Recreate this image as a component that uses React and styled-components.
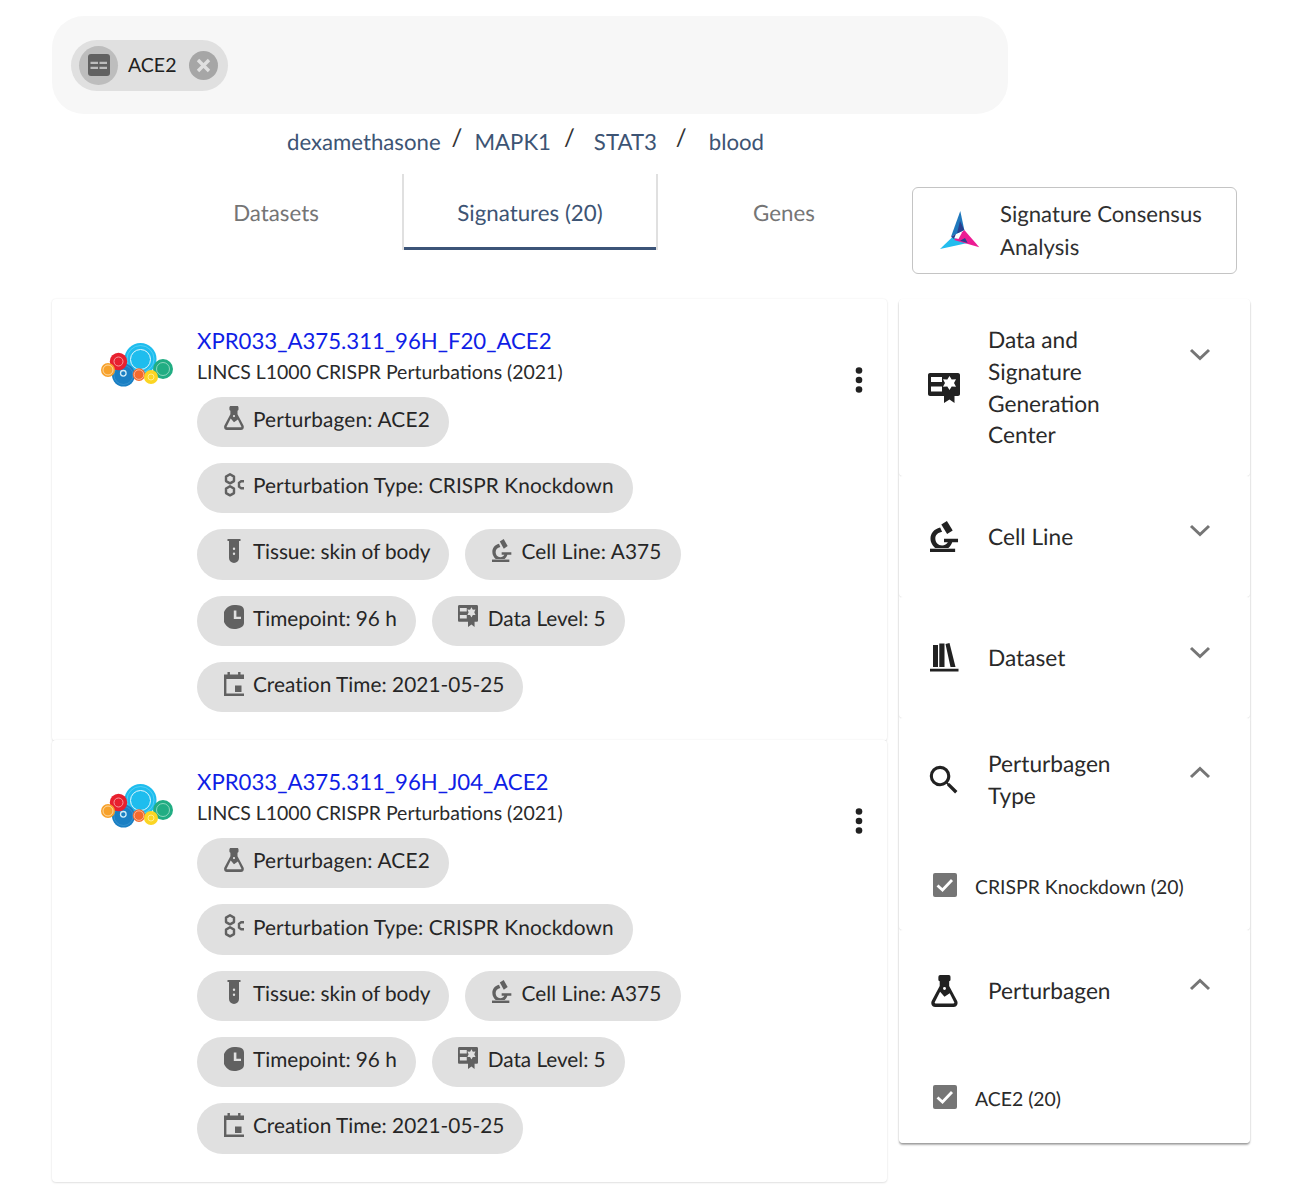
import React from 'react';
import styled, { createGlobalStyle } from 'styled-components';

const Global = createGlobalStyle`
  html, body { margin: 0; padding: 0; background: #fff; }
  body { font-family: Lato, "Open Sans", sans-serif; color: #212121; text-rendering: geometricPrecision; }
  * { box-sizing: border-box; }
`;

const Page = styled.div`
  width: 1294px;
  height: 1188px;
  padding: 16px 44px 0 52px;
  overflow: hidden;
`;
const SearchBox = styled.div`
  width: 956px;
  height: 98px;
  border-radius: 32px;
  background: #f7f7f7;
  display: flex;
  align-items: center;
  padding: 0 19px;
`;
const Chip = styled.div`
  height: 51px;
  width: 157px;
  border-radius: 26px;
  background: #e0e0e0;
  display: flex;
  align-items: center;
  padding: 0 10px 0 8px;
  font-size: 19.5px;
`;
const ChipAvatar = styled.div`
  width: 39px;
  height: 39px;
  border-radius: 50%;
  background: #bdbdbd;
  display: flex;
  align-items: center;
  justify-content: center;
  flex: none;
`;
const ChipLabel = styled.span`
  margin-left: 10px;
  flex: 1;
`;
const Suggestions = styled.div`
  display: flex;
  align-items: baseline;
  padding-left: 235px;
  height: 63px;
  padding-top: 13px;
  font-size: 22.2px;
  color: #3d5474;
`;
const Crumb = styled.span`
  color: #3d5474;
  margin-left: ${p => p.$before}px;
  margin-right: ${p => p.$after}px;
`;
const Slash = styled.span`
  color: #333;
  font-size: 24px;
  position: relative;
  top: -4px;
`;
const TabRow = styled.div`
  display: flex;
  align-items: flex-start;
  height: 125px;
  margin-top: -3px;
  padding-left: 97px;
`;
const Tab = styled.div`
  width: 254px;
  height: 76px;
  display: flex;
  align-items: center;
  justify-content: center;
  font-size: 22.3px;
  color: ${p => (p.$active ? '#3d5474' : '#757575')};
  ${p => p.$active && `
    margin: 0 -1px;
    width: 256px;
    border-left: 2px solid #e0e0e0;
    border-right: 2px solid #e0e0e0;
    box-shadow: inset 0 -3px 0 #3c5478;
  `}
`;
const ConsensusButton = styled.div`
  margin: 13px 0 0 1px;
  width: 325px;
  height: 87px;
  border: 1px solid #c4c4c4;
  border-radius: 6px;
  display: flex;
  align-items: center;
  padding: 0 20px 2px 27px;
  font-size: 22.15px;
  line-height: 33px;
  color: #303030;
`;
const ConsensusText = styled.span`
  margin-left: 20px;
`;
const Columns = styled.div`
  display: flex;
  align-items: flex-start;
  gap: 12px;
`;
const CardColumn = styled.div`
  width: 835px;
  flex: none;
`;
const Card = styled.div`
  height: 442px;
  background: #fff;
  border-radius: 4px;
  box-shadow: 0 1px 2px rgba(0,0,0,.1), 0 0 2px rgba(0,0,0,.08);
  display: flex;
  padding: 26px 0 0 48px;
  position: relative;
  & + & { margin-top: -0.6px; }
`;
const LogoWrap = styled.div`
  width: 97px;
  flex: none;
  padding-top: 16px;
`;
const CardBody = styled.div`
  width: 640px;
`;
const Title = styled.a`
  display: block;
  font-size: 22.2px;
  line-height: 32px;
  color: #0f1ee6;
`;
const Subtitle = styled.div`
  font-size: 19.47px;
  line-height: 30px;
  color: #2a2a2a;
  margin: 1px 0 8.7px;
`;
const ChipWrap = styled.div`
  display: flex;
  flex-wrap: wrap;
  gap: 16px;
`;
const MetaChip = styled.div`
  height: 50.3px;
  border-radius: 26px;
  background: #e0e0e0;
  display: flex;
  align-items: center;
  padding-right: 19px;
  font-size: 20.8px;
  color: #262626;
  letter-spacing: ${p => p.$track}px;
`;
const MetaIcon = styled.span`
  width: 56px;
  height: 24px;
  flex: none;
  display: flex;
  justify-content: center;
  padding: 0 7.5px 0 24.5px;
  margin-top: -7px;
  color: #616161;
`;
const MetaLabel = styled.span`
  margin-top: -5px;
`;
const Kebab = styled.div`
  position: absolute;
  right: 24px;
  top: 68px;
  color: #212121;
`;
const Side = styled.div`
  width: 351px;
  flex: none;
  border-radius: 4px;
  box-shadow: 0 2px 2px rgba(0,0,0,.3), 0 0 1px rgba(0,0,0,.1);
`;
const Accordion = styled.div`
  background: #fff;
  border-radius: 4px;
  height: ${p => p.$h}px;
  box-shadow: 0 1px 1px rgba(0,0,0,.1);
  position: relative;
`;
const AccordionHead = styled.div`
  display: flex;
  align-items: center;
  height: ${p => p.$h}px;
  padding-left: 28px;
  font-size: 22.7px;
  line-height: 31.9px;
  color: #2a2a2a;
`;
const AccIcon = styled.span`
  width: 34px;
  height: 34px;
  flex: none;
  color: #212121;
  display: flex;
  align-items: center;
  justify-content: center;
`;
const AccTitle = styled.div`
  width: 172px;
  margin-left: 27px;
`;
const Chevron = styled.span`
  align-self: flex-start;
  margin-top: ${p => p.$top}px;
  margin-left: 29px;
  color: #757575;
  display: flex;
`;
const CheckRow = styled.div`
  display: flex;
  align-items: center;
  padding-left: 34px;
  margin-top: ${p => p.$top}px;
  font-size: 19.4px;
  color: #2a2a2a;
`;
const CheckBox = styled.span`
  width: 24px;
  height: 24px;
  border-radius: 2px;
  background: #757575;
  display: flex;
  margin: -6px 18px 0 0;
  flex: none;
`;

const Flask = ({ w = 20, h = 24 }) => (
  <svg width={w} height={h} viewBox="0 0 20 24" fill="currentColor">
    <path fillRule="evenodd" d="M6.800 0h6.400c.9 0 1.300.7 1.300 1.600v2c0 .6-.4 1-1 1.100v3.600l6 11.200c.9 1.900-.2 4.500-2.500 4.500H2.900C.6 24-.5 21.400.4 19.500l6-11.200V4.700c-.6-.1-1-.5-1-1.100v-2C5.500.7 5.900 0 6.800 0zM6.700 12.600 2.700 20.400c-.2.500.1.900.6.900h13.400c.5 0 .8-.4.600-.9l-3.400-6.800-3.900 2.700zM10 9a1.100 1.100 0 1 0 0 2.200A1.100 1.100 0 0 0 10 9z" />
  </svg>
);
const Molecules = () => (
  <svg width="20" height="24" viewBox="0 0 20 24" fill="none" stroke="currentColor" strokeWidth="2.400">
    <path d="M6 1.300l4 2.300v4.500l-4 2.300-4-2.300V3.600zM6 13.300l4 2.300v4.500l-4 2.300-4-2.300v-4.500z" strokeLinejoin="round" />
    <path d="M20 8.300h-2.800L15 9.800v3.900l2.200 1.500H20" />
  </svg>
);
const Tube = () => (
  <svg width="14" height="24" viewBox="0 0 14 24" fill="currentColor">
    <path fillRule="evenodd" d="M0.500 0h13v2H12v17a5 5 0 0 1-10 0V2H.5zM7 8.500a1.200 1.200 0 1 0 0 2.400A1.200 1.200 0 0 0 7 8.500zm0 5a1.200 1.200 0 1 0 0 2.400 1.200 1.200 0 0 0 0-2.400z" />
  </svg>
);
const Scope = ({ w = 20, h = 23 }) => (
  <svg width={w} height={h} viewBox="0 0 30 31" preserveAspectRatio="none" fill="currentColor">
    <path d="M11.700 3.400 17.500 0l6 9.500-5.800 3.500z" />
    <path d="M10.500 6.500C4 8 .5 12.500.5 17.500c0 4 2.500 7.500 5 9.500H19c2-1.500 3.300-3.500 4-5.700h6v-3.500H14.500v3.500h4c-1 1.700-3.500 3.200-6 3.200-4 0-7-3-7-7 0-3.500 2.500-6 7-6.800z" />
    <path d="M0 27.700h26V31H0z" />
  </svg>
);
const Cert = ({ w = 20, h = 22 }) => (
  <svg width={w} height={h} viewBox="0 0 32 30" preserveAspectRatio="none" fill="currentColor">
    <path fillRule="evenodd" d="M2 0h28c1.100 0 2 .9 2 2v19c0 1.100-.9 2-2 2H2c-1.100 0-2-.9-2-2V2C0 .9.900 0 2 0zM3 4v5h11V4zM3 13.500v5h11v-5zM21.500 3l-2.200 3.500-4.300-.2 2 3.700-2 3.700 4.300-.2 2.200 3.500 2.200-3.500 4.300.2-2-3.700 2-3.700-4.300.2z" />
    <path d="M16 16.500l5.500 1 5-1V30l-5-3.500-5.500 3.500z" />
  </svg>
);
const Clock = () => (
  <svg width="20" height="24" viewBox="0 0 20 24" fill="currentColor">
    <path fillRule="evenodd" d="M10 0C16 0 20 1 20 5.500V18c0 3.500-4 6-10 6A11 12 0 0 1 10 0zM9.800 5.500V14H17v-2.300h-4.600V5.500z" />
  </svg>
);
const Calendar = () => (
  <svg width="20" height="24" viewBox="0 0 20 24" fill="currentColor">
    <path fillRule="evenodd" d="M3.500 0h2.400v2.500h8.200V0h2.400v2.500H20V7H0V2.500h3.500zM0 7h2.400v14.500H20V24H0zM11 13.500h6.500V20H11z" />
  </svg>
);
const Chev = ({ up }) => (
  <svg width="22" height="14" viewBox="0 0 22 14" fill="none" stroke="currentColor" strokeWidth="3">
    <path d={up ? 'M2 12l9-8.500 9 8.500' : 'M2 2l9 8.500L20 2'} />
  </svg>
);
const Magnify = () => (
  <svg width="38" height="38" viewBox="0 0 24 24" fill="currentColor" style={{ flex: 'none' }}>
    <path d="M9.500 3A6.500 6.500 0 0 1 16 9.500c0 1.610-.59 3.090-1.560 4.230l.27.27h.79l5 5-1.500 1.500-5-5v-.79l-.27-.27A6.516 6.516 0 0 1 9.500 16 6.500 6.500 0 0 1 3 9.500 6.500 6.500 0 0 1 9.500 3m0 2C7 5 5 7 5 9.500S7 14 9.500 14 14 12 14 9.500 12 5 9.500 5z" />
  </svg>
);
const Books = () => (
  <svg width="29" height="29" viewBox="0 0 29 29" fill="currentColor">
    <path d="M3 2h5v22H3zM9.300.5h5.200V24H9.300zM15.500 1l4-1 6 24h-5zM0 25.700h28.500v2.800H0z" />
  </svg>
);
const Check = () => (
  <svg width="24" height="24" viewBox="0 0 24 24" fill="none" stroke="#fff" strokeWidth="2.800">
    <path d="M4.500 12.500l5 4.500L19 7" />
  </svg>
);
const Logo = () => (
  <svg width="74" height="48" viewBox="0 0 74 48">
    <circle cx="40.500" cy="18" r="16" fill="#1ebdee" />
    <circle cx="40.500" cy="18" r="13.500" fill="none" stroke="#6dd5f5" strokeWidth="0.700" />
    <circle cx="40.500" cy="18.500" r="10" fill="none" stroke="#e5f7fd" strokeWidth="1" />
    <circle cx="23.500" cy="34" r="11.500" fill="#1a7fc3" />
    <circle cx="23.500" cy="34" r="9.500" fill="none" stroke="#4fa3d8" strokeWidth="0.500" />
    <circle cx="23.300" cy="32.300" r="2.800" fill="none" stroke="#d0ecf8" strokeWidth="1.300" />
    <circle cx="63" cy="28" r="10" fill="#21ad83" />
    <circle cx="63" cy="28" r="6.500" fill="none" stroke="#b8e6d6" strokeWidth="0.700" />
    <circle cx="18.500" cy="20.500" r="8.700" fill="#e8202e" />
    <circle cx="18.500" cy="20.500" r="4.500" fill="none" stroke="#f59aa0" strokeWidth="1" />
    <circle cx="8" cy="29" r="7" fill="#f7a12b" />
    <circle cx="8" cy="29" r="5" fill="none" stroke="#fde6c0" strokeWidth="0.800" />
    <circle cx="39" cy="33.600" r="6.300" fill="#f4692d" />
    <circle cx="39" cy="33.600" r="4.800" fill="none" stroke="#fcd2bd" strokeWidth="0.700" />
    <circle cx="51" cy="36" r="7" fill="#fbd523" />
    <circle cx="51" cy="36" r="3" fill="none" stroke="#fff3a8" strokeWidth="0.800" />
  </svg>
);
const ConsensusLogo = () => (
  <svg width="40" height="38" viewBox="0 0 40 38" style={{ flex: 'none' }}>
    <path d="M20.300 0 24.300 19 11 25.700z" fill="#1f78bd" />
    <path d="M0 38 12.700 25.700 27.700 32z" fill="#24bdee" />
    <path d="M24.300 19 39.300 36.300 14 29z" fill="#ec1c93" />
    <path d="M20 10 24.300 19 17 22.500z" fill="#2a3f8f" />
    <path d="M11 25.700 16 23 14 28z" fill="#2a3f8f" />
    <path d="M20 29.800 27.700 32 25 27z" fill="#2a3f8f" />
    <path d="M16.500 23 22 21.500 18.500 28 14.500 27z" fill="#fff" />
  </svg>
);
const Dots = () => (
  <svg width="8" height="26" viewBox="0 0 8 26" fill="currentColor">
    <circle cx="4" cy="3.500" r="3.300" /><circle cx="4" cy="13" r="3.300" /><circle cx="4" cy="22.500" r="3.300" />
  </svg>
);

const metas = [
  [<Flask key="a" />, 'Perturbagen: ACE2', 0.18],
  [<Molecules key="b" />, 'Perturbation Type: CRISPR Knockdown', 0.1],
  [<Tube key="c" />, 'Tissue: skin of body', -0.1],
  [<Scope key="d" />, 'Cell Line: A375', 0.13],
  [<Clock key="e" />, 'Timepoint: 96 h', -0.03],
  [<Cert key="f" />, 'Data Level: 5', -0.05],
  [<Calendar key="g" />, 'Creation Time: 2021-05-25', 0.04],
];

const SigCard = ({ title }) => (
  <Card>
    <LogoWrap><Logo /></LogoWrap>
    <CardBody>
      <Title>{title}</Title>
      <Subtitle>LINCS L1000 CRISPR Perturbations (2021)</Subtitle>
      <ChipWrap>
        {metas.map(([icon, label, track]) => (
          <MetaChip key={label} $track={track}>
            <MetaIcon>{icon}</MetaIcon>
            <MetaLabel>{label}</MetaLabel>
          </MetaChip>
        ))}
      </ChipWrap>
    </CardBody>
    <Kebab><Dots /></Kebab>
  </Card>
);

export default function App() {
  return (
    <Page>
      <Global />
      <SearchBox>
        <Chip>
          <ChipAvatar>
            <svg width="22" height="22" viewBox="0 0 22 22">
              <rect width="22" height="22" rx="3" fill="#616161" />
              <path d="M2.500 7.700h7.500V10H2.500zM11.500 7.700H19V10h-7.500zM2.500 12.700h7.500V15H2.500zM11.500 12.700H19V15h-7.500z" fill="#bdbdbd" />
            </svg>
          </ChipAvatar>
          <ChipLabel>ACE2</ChipLabel>
          <svg width="29" height="29" viewBox="0 0 29 29">
            <circle cx="14.500" cy="14.500" r="14.500" fill="#a6a6a6" />
            <path d="M9 9l11 11M20 9L9 20" stroke="#e0e0e0" strokeWidth="3.400" />
          </svg>
        </Chip>
      </SearchBox>
      <Suggestions>
        <Crumb $before={0} $after={11}>dexamethasone</Crumb>
        <Slash>/</Slash>
        <Crumb $before={12} $after={13}>MAPK1</Crumb>
        <Slash>/</Slash>
        <Crumb $before={19} $after={19}>STAT3</Crumb>
        <Slash>/</Slash>
        <Crumb $before={22} $after={0}>blood</Crumb>
      </Suggestions>
      <TabRow>
        <Tab>Datasets</Tab>
        <Tab $active>Signatures (20)</Tab>
        <Tab>Genes</Tab>
        <ConsensusButton>
          <ConsensusLogo />
          <ConsensusText>Signature Consensus Analysis</ConsensusText>
        </ConsensusButton>
      </TabRow>
      <Columns>
        <CardColumn>
          <SigCard title="XPR033_A375.311_96H_F20_ACE2" />
          <SigCard title="XPR033_A375.311_96H_J04_ACE2" />
        </CardColumn>
        <Side>
          <Accordion $h={177}>
            <AccordionHead $h={177}>
              <AccIcon><Cert w={32} h={30} /></AccIcon>
              <AccTitle>Data and Signature Generation Center</AccTitle>
              <Chevron $top={49}><Chev /></Chevron>
            </AccordionHead>
          </Accordion>
          <Accordion $h={121}>
            <AccordionHead $h={121}>
              <AccIcon><Scope w={29} h={31} /></AccIcon>
              <AccTitle>Cell Line</AccTitle>
              <Chevron $top={48}><Chev /></Chevron>
            </AccordionHead>
          </Accordion>
          <Accordion $h={121}>
            <AccordionHead $h={121}>
              <AccIcon><Books /></AccIcon>
              <AccTitle>Dataset</AccTitle>
              <Chevron $top={49}><Chev /></Chevron>
            </AccordionHead>
          </Accordion>
          <Accordion $h={212}>
            <AccordionHead $h={124}>
              <AccIcon><Magnify /></AccIcon>
              <AccTitle>Perturbagen Type</AccTitle>
              <Chevron $top={47}><Chev up /></Chevron>
            </AccordionHead>
            <CheckRow $top={34}><CheckBox><Check /></CheckBox>CRISPR Knockdown (20)</CheckRow>
          </Accordion>
          <Accordion $h={213}>
            <AccordionHead $h={122}>
              <AccIcon><Flask w={29} h={32} /></AccIcon>
              <AccTitle>Perturbagen</AccTitle>
              <Chevron $top={47}><Chev up /></Chevron>
            </AccordionHead>
            <CheckRow $top={36}><CheckBox><Check /></CheckBox>ACE2 (20)</CheckRow>
          </Accordion>
        </Side>
      </Columns>
    </Page>
  );
}
